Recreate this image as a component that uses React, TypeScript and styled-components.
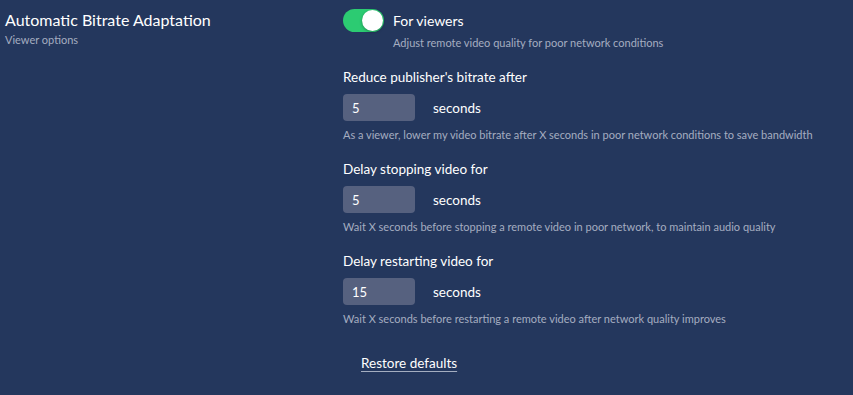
import * as React from "react";
import styled, { createGlobalStyle } from "styled-components";

const GlobalStyle = createGlobalStyle`
  html, body {
    margin: 0;
    padding: 0;
    background: #24375d;
  }
  body {
    font-family: Lato, "Open Sans", sans-serif;
    -webkit-font-smoothing: antialiased;
  }
`;

const Page = styled.div`
  min-height: 395px;
  background: #24375d;
  color: #ffffff;
  display: flex;
  padding: 9px 0 0 5px;
  box-sizing: border-box;
`;

const Side = styled.div`
  width: 338px;
  flex: none;
`;

const Title = styled.div`
  font-size: 16px;
  line-height: 21px;
  font-weight: 400;
`;

const Subtitle = styled.div`
  font-size: 11px;
  line-height: 14px;
  color: #a4adc0;
  margin-top: 3px;
`;

const Main = styled.div`
  display: flex;
  flex-direction: column;
  align-items: flex-start;
`;

const ToggleRow = styled.label`
  display: flex;
  align-items: center;
  gap: 9px;
  font-size: 14px;
  line-height: 23px;
`;

const Track = styled.span<{ $on: boolean }>`
  position: relative;
  width: 41px;
  height: 23px;
  border-radius: 12px;
  background: ${(p) => (p.$on ? "#2ccb72" : "#56617f")};
  flex: none;
`;

const Knob = styled.span<{ $on: boolean }>`
  position: absolute;
  top: 1px;
  left: ${(p) => (p.$on ? "19px" : "1px")};
  width: 21px;
  height: 21px;
  border-radius: 50%;
  background: #ffffff;
  box-shadow: 0 1px 3px rgba(0, 0, 0, 0.3);
`;

const Hint = styled.div<{ $indent?: boolean }>`
  font-size: 11px;
  line-height: 14px;
  color: #a4adc0;
  margin-top: ${(p) => (p.$indent ? "4px" : "7px")};
  margin-left: ${(p) => (p.$indent ? "50px" : "0")};
`;

const Field = styled.div`
  display: flex;
  flex-direction: column;
  align-items: flex-start;
  margin-top: 18px;

  &:first-of-type {
    margin-top: 19px;
  }
`;

const FieldLabel = styled.div`
  font-size: 13.5px;
  line-height: 18px;
  font-weight: 400;
`;

const InputRow = styled.div`
  display: flex;
  align-items: center;
  gap: 18px;
  margin-top: 8px;
  font-size: 13.5px;
`;

const NumberInput = styled.input`
  width: 72px;
  height: 27px;
  box-sizing: border-box;
  border: none;
  border-radius: 4px;
  background: #56617f;
  color: #ffffff;
  font-family: Lato, "Open Sans", sans-serif;
  font-size: 13px;
  padding: 0 9px;
  outline: none;
`;

const RestoreLink = styled.a`
  margin: 28px 0 0 18px;
  font-size: 13.5px;
  line-height: 18px;
  color: #ffffff;
  text-decoration: underline;
  text-decoration-color: #a4adc0;
  text-underline-offset: 3px;
  cursor: pointer;
`;

interface IFieldProps {
  label: string;
  value: string;
  hint: string;
}

function DelayField({ label, value, hint }: IFieldProps) {
  return (
    <Field>
      <FieldLabel>{label}</FieldLabel>
      <InputRow>
        <NumberInput defaultValue={value} />
        <span>seconds</span>
      </InputRow>
      <Hint>{hint}</Hint>
    </Field>
  );
}

const fields: IFieldProps[] = [
  {
    label: "Reduce publisher's bitrate after",
    value: "5",
    hint: "As a viewer, lower my video bitrate after X seconds in poor network conditions to save bandwidth",
  },
  {
    label: "Delay stopping video for",
    value: "5",
    hint: "Wait X seconds before stopping a remote video in poor network, to maintain audio quality",
  },
  {
    label: "Delay restarting video for",
    value: "15",
    hint: "Wait X seconds before restarting a remote video after network quality improves",
  },
];

export default function App() {
  const [on, setOn] = React.useState(true);
  return (
    <>
      <GlobalStyle />
      <Page>
        <Side>
          <Title>Automatic Bitrate Adaptation</Title>
          <Subtitle>Viewer options</Subtitle>
        </Side>
        <Main>
          <ToggleRow onClick={() => setOn(!on)}>
            <Track $on={on}>
              <Knob $on={on} />
            </Track>
            For viewers
          </ToggleRow>
          <Hint $indent>Adjust remote video quality for poor network conditions</Hint>
          {fields.map((f) => (
            <DelayField key={f.label} {...f} />
          ))}
          <RestoreLink>Restore defaults</RestoreLink>
        </Main>
      </Page>
    </>
  );
}
